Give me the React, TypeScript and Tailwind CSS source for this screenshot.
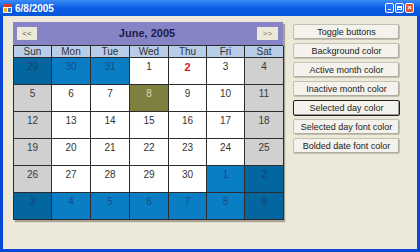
import React from "react";

type Day = { n: number; inactive?: boolean; selected?: boolean; bold?: boolean };

const WEEKDAYS = ["Sun", "Mon", "Tue", "Wed", "Thu", "Fri", "Sat"];

const ROWS: Day[][] = [
  [{ n: 29, inactive: true }, { n: 30, inactive: true }, { n: 31, inactive: true }, { n: 1 }, { n: 2, bold: true }, { n: 3 }, { n: 4 }],
  [{ n: 5 }, { n: 6 }, { n: 7 }, { n: 8, selected: true }, { n: 9 }, { n: 10 }, { n: 11 }],
  [{ n: 12 }, { n: 13 }, { n: 14 }, { n: 15 }, { n: 16 }, { n: 17 }, { n: 18 }],
  [{ n: 19 }, { n: 20 }, { n: 21 }, { n: 22 }, { n: 23 }, { n: 24 }, { n: 25 }],
  [{ n: 26 }, { n: 27 }, { n: 28 }, { n: 29 }, { n: 30 }, { n: 1, inactive: true }, { n: 2, inactive: true }],
  [3, 4, 5, 6, 7, 8, 9].map((n) => ({ n, inactive: true })),
];

const BUTTONS = [
  "Toggle buttons",
  "Background color",
  "Active month color",
  "Inactive month color",
  "Selected day color",
  "Selected day font color",
  "Bolded date font color",
];

function cellClass(d: Day, col: number) {
  const weekend = col === 0 || col === 6;
  if (d.selected) return "bg-[#7f7f40] text-[#d8d8b0]";
  if (d.inactive) return weekend ? "bg-[#03669e] text-[#12406e]" : "bg-[#0a7ec4] text-[#164c82]";
  if (weekend) return "bg-[#d0d0d0] text-[#3a3a3a]";
  return "bg-white text-[#333]";
}

function TitleIcon() {
  return (
    <svg width="9" height="9" viewBox="0 0 9 9">
      <rect x="0" y="0" width="9" height="9" fill="#f2f2f2" />
      <rect x="0" y="0" width="9" height="3" fill="#d83a1c" />
      <rect x="1" y="4" width="3" height="4" fill="#e8b820" />
      <rect x="5" y="4" width="3" height="4" fill="#3a6ad8" />
    </svg>
  );
}

function Calendar() {
  return (
    <div className="w-[270px] shadow-[2px_2px_1px_rgba(0,0,0,0.3)]">
      <div className="h-[23px] bg-[#8784c6] flex items-center justify-between px-[4px]">
        <div className="w-[20px] h-[13px] bg-[#ece9d8] text-[8px] leading-[13px] text-center text-[#555]">&lt;&lt;</div>
        <div className="text-[11px] font-bold text-[#1c1c48]">June, 2005</div>
        <div className="w-[21px] h-[13px] bg-[#ece9d8] text-[8px] leading-[13px] text-center text-[#777] mr-[1px]">&gt;&gt;</div>
      </div>
      <div className="grid grid-cols-[38px_39px_39px_39px_38px_38px_39px] border-l border-t border-[#2c2c2c]">
        {WEEKDAYS.map((w) => (
          <div key={w} className="h-[12px] bg-[#b7cde9] border-r border-b border-[#2c2c2c] text-[10px] leading-[11px] text-center text-[#333]">
            {w}
          </div>
        ))}
        {ROWS.flatMap((row, r) =>
          row.map((d, c) => (
            <div
              key={`${r}-${c}`}
              className={`h-[27px] border-r border-b border-[#2c2c2c] text-[10px] leading-none pt-[4px] text-center ${cellClass(d, c)}`}
            >
              <span className={d.bold ? "font-bold text-[#e01818] text-[11px]" : ""}>{d.n}</span>
            </div>
          ))
        )}
      </div>
    </div>
  );
}

export default function App() {
  return (
    <div className="w-[420px] h-[252px] flex flex-col bg-[#0848d8] font-['Liberation_Sans',Arial,sans-serif]">
      <div className="h-[16px] flex items-center px-[3px] bg-linear-to-b from-[#3c8cf6] via-[#0a5ce4] to-[#0654d8]">
        <TitleIcon />
        <div className="ml-[3px] text-[10px] font-bold text-white">6/8/2005</div>
        <div className="ml-auto flex gap-[1px] mr-[3px]">
          <div className="w-[9px] h-[10px] rounded-[2px] border border-white bg-[#2a6ef0] flex items-end justify-center pb-[2px]">
            <div className="w-[3px] h-[1px] bg-white" />
          </div>
          <div className="w-[9px] h-[10px] rounded-[2px] border border-white bg-[#2a6ef0] flex items-center justify-center">
            <div className="w-[5px] h-[4px] border border-white border-t-2" />
          </div>
          <div className="w-[9px] h-[10px] rounded-[2px] border border-white bg-[#e0522c] flex items-center justify-center text-white text-[8px] leading-none font-bold">
            ×
          </div>
        </div>
      </div>
      <div className="flex-1 mx-[3px] mb-[3px] bg-[#ece9d8] flex items-start pl-[10px] pt-[6px]">
        <Calendar />
        <div className="ml-[10px] mt-[2px] w-[107px] flex flex-col gap-[3px]">
          {BUTTONS.map((b) => (
            <div
              key={b}
              className={`h-[16px] rounded-[2px] bg-[#f3f2ec] text-[9px] leading-[14px] text-center text-[#222] border ${
                b === "Selected day color"
                  ? "border-[#222] shadow-[inset_-1px_-1px_0_#999]"
                  : "border-[#c4c1b4] shadow-[inset_-1px_-1px_0_#b0ad9f]"
              }`}
            >
              {b}
            </div>
          ))}
        </div>
      </div>
    </div>
  );
}
